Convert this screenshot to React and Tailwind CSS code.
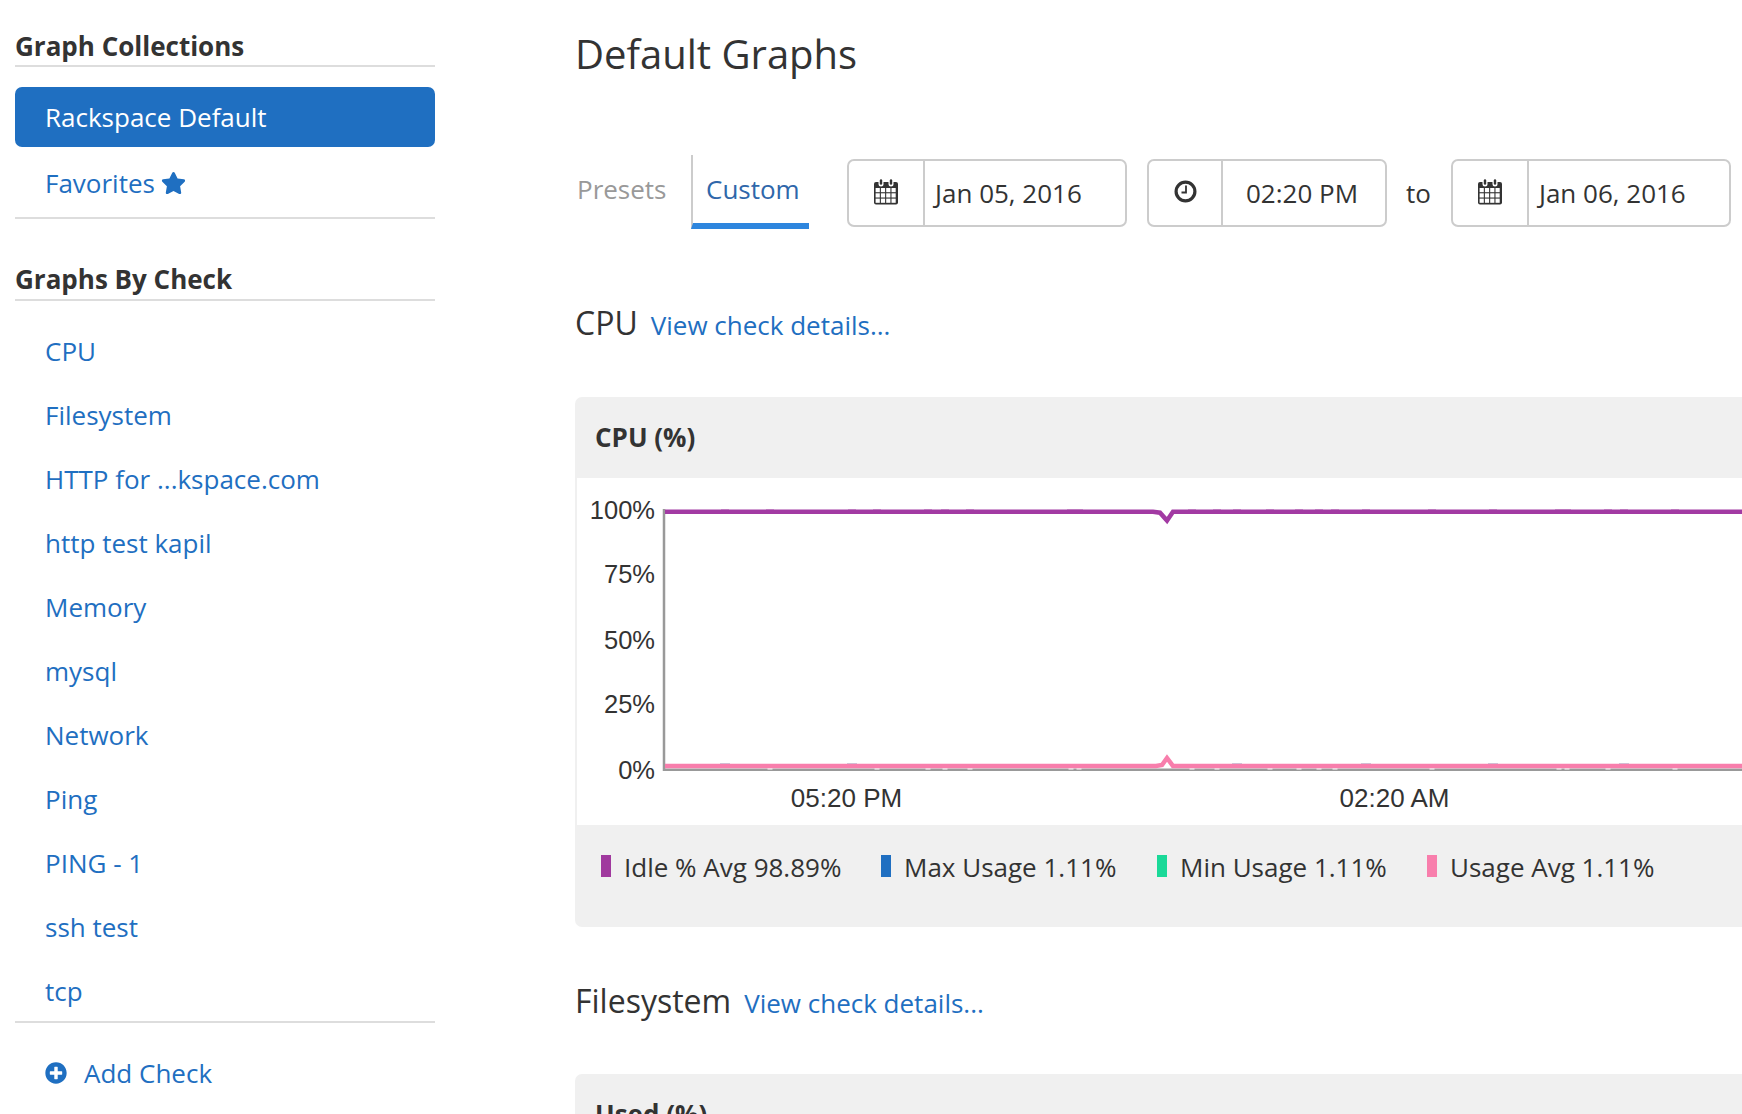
import { FaStar, FaPlusCircle } from "react-icons/fa";

const FONT = "font-['Open_Sans',sans-serif]";

const CHECKS = [
  "CPU",
  "Filesystem",
  "HTTP for ...kspace.com",
  "http test kapil",
  "Memory",
  "mysql",
  "Network",
  "Ping",
  "PING - 1",
  "ssh test",
  "tcp",
];

const LEGEND = [
  { label: "Idle % Avg 98.89%", color: "bg-[#a0399e]", width: "w-[280px]" },
  { label: "Max Usage 1.11%", color: "bg-[#1f6fc1]", width: "w-[276px]" },
  { label: "Min Usage 1.11%", color: "bg-[#1ad998]", width: "w-[270px]" },
  { label: "Usage Avg 1.11%", color: "bg-[#f87eac]", width: "w-[280px]" },
];

function CalendarIcon() {
  return (
    <svg width="26" height="27" viewBox="0 0 26 27" className="text-[#333]">
      <rect x="1" y="4" width="24" height="22.5" rx="2" fill="currentColor" />
      <rect x="5.5" y="0.5" width="5" height="8" rx="2.5" fill="#fff" />
      <rect x="15.5" y="0.5" width="5" height="8" rx="2.5" fill="#fff" />
      <rect x="6.8" y="1.3" width="2.4" height="5.5" rx="1.2" fill="currentColor" />
      <rect x="16.8" y="1.3" width="2.4" height="5.5" rx="1.2" fill="currentColor" />
      {[0, 1, 2].map((row) =>
        [0, 1, 2, 3].map((col) => (
          <rect
            key={`${row}-${col}`}
            x={2.6 + col * 5.3}
            y={10 + row * 5.3}
            width="4.2"
            height="4.2"
            fill="#fff"
          />
        ))
      )}
    </svg>
  );
}

function ClockIcon() {
  return (
    <svg width="23" height="23" viewBox="0 0 23 23" fill="none" stroke="#333">
      <circle cx="11.5" cy="11.5" r="9.4" strokeWidth="3.2" />
      <path d="M12 5.5v7H7.5" strokeWidth="1.8" />
    </svg>
  );
}

function InputBox({ icon, value, addonWidth, width, textClass }) {
  return (
    <div
      className={`flex h-[68px] items-stretch rounded-[7px] border-2 border-[#ccc] bg-white ${width}`}
    >
      <div
        className={`flex items-center justify-center border-r-2 border-[#ccc] pb-[3px] ${addonWidth}`}
      >
        {icon}
      </div>
      <div className={`flex items-center text-[26px] text-[#333] ${textClass}`}>{value}</div>
    </div>
  );
}

function SectionHeading({ title, className }) {
  return (
    <div className={`flex items-baseline ${className}`}>
      <span className="text-[32px] leading-[42px] text-[#333]">{title}</span>
      <span className="ml-[13px] text-[26px] text-[#1f6fc1]">View check details...</span>
    </div>
  );
}

// places where the flat series is not quite covered in the original chart
const NOTCH_X = [770, 877, 928, 945, 970, 1071, 1079, 1192, 1217, 1270, 1299, 1319, 1335, 1432, 1559, 1567, 1608, 1675];
const SOFT_X = [725, 852, 1237, 1366, 1493, 1624];

function Chart() {
  return (
    <svg
      width="1165"
      height="347"
      viewBox="577 478 1165 347"
      className="block"
      fontFamily="'Liberation Sans', sans-serif"
      fontSize="25.5"
      fill="#333"
    >
      <text x="655" y="519" textAnchor="end">100%</text>
      <text x="655" y="583" textAnchor="end">75%</text>
      <text x="655" y="649" textAnchor="end">50%</text>
      <text x="655" y="713" textAnchor="end">25%</text>
      <text x="655" y="779" textAnchor="end">0%</text>
      <text x="846.5" y="807" textAnchor="middle" fontSize="26">05:20 PM</text>
      <text x="1394.5" y="807" textAnchor="middle" fontSize="26">02:20 AM</text>
      <path d="M664 509V769.7H1742" fill="none" stroke="#999" strokeWidth="2.5" />
      {NOTCH_X.map((x) => (
        <rect key={x} x={x - 2.5} y="768.3" width="5" height="1.2" fill="#fff" />
      ))}
      {SOFT_X.map((x) => (
        <rect key={x} x={x - 5} y="763" width="10" height="1" fill="#8fa6c4" opacity="0.5" />
      ))}
      {[...NOTCH_X, ...SOFT_X].map((x) => (
        <rect key={x} x={x - 4} y="509" width="8" height="1" fill="#d9b3d8" />
      ))}
      <path
        d="M665 511.7H1153L1160 512.7L1167 520.5L1173 511.7H1742"
        fill="none"
        stroke="#a23aa3"
        strokeWidth="4.5"
      />
      <path
        d="M665 766H1156L1162 765L1167 758L1173 766H1742"
        fill="none"
        stroke="#f87eac"
        strokeWidth="4.5"
      />
    </svg>
  );
}

export default function App() {
  return (
    <div className={`flex h-[1114px] w-[1742px] overflow-hidden bg-white ${FONT}`}>
      <aside className="ml-[15px] w-[420px] shrink-0">
        <h3 className="mt-[28px] border-b-2 border-[#ddd] pb-[1px] text-[26px] font-bold leading-[36px] text-[#333]">
          Graph Collections
        </h3>
        <div className="mt-[20px] flex h-[60px] items-center rounded-[7px] bg-[#1f6fc1] pl-[30px] text-[26px] text-white">
          Rackspace Default
        </div>
        <div className="flex h-[72px] items-center gap-[6px] border-b-2 border-[#ddd] pl-[30px] pt-[2px] text-[26px] text-[#1f6fc1]">
          Favorites
          <FaStar className="mb-[1px] h-[24px] w-[25px]" />
        </div>
        <h3 className="mt-[42px] border-b-2 border-[#ddd] pb-[2px] text-[26px] font-bold leading-[36px] text-[#333]">
          Graphs By Check
        </h3>
        <ul className="mt-[18px] border-b-2 border-[#ddd]">
          {CHECKS.map((check) => (
            <li
              key={check}
              className="flex h-[64.1px] items-center pl-[30px] text-[26px] text-[#1f6fc1] last:h-[61px] last:pt-[3px]"
            >
              {check}
            </li>
          ))}
        </ul>
        <div className="mt-[31px] flex items-center pl-[30px] text-[26px] text-[#1f6fc1]">
          <FaPlusCircle className="mr-[17px] h-[22px] w-[22px]" />
          Add Check
        </div>
      </aside>

      <main className="ml-[140px] w-[1167px] shrink-0 overflow-hidden">
        <h1 className="mt-[28px] text-[40px] leading-[52px] text-[#333]">Default Graphs</h1>

        <div className="mt-[75px] flex items-start">
          <div className="flex h-[74px] w-[116px] items-center pb-[6px] pl-[2px] text-[26px] text-[#999]">
            Presets
          </div>
          <div className="flex h-[74px] w-[118px] items-center border-b-[6px] border-l-2 border-b-[#2e86de] border-l-[#ccc] pl-[13px] text-[26px] text-[#2f67aa]">
            Custom
          </div>
          <div className="ml-[38px] mt-[4px]">
            <InputBox
              icon={<CalendarIcon />}
              value="Jan 05, 2016"
              width="w-[280px]"
              addonWidth="w-[76px]"
              textClass="pl-[10px]"
            />
          </div>
          <div className="ml-[20px] mt-[4px]">
            <InputBox
              icon={<ClockIcon />}
              value="02:20 PM"
              width="w-[240px]"
              addonWidth="w-[74px]"
              textClass="pl-[23px]"
            />
          </div>
          <div className="ml-[19px] mt-[4px] flex h-[68px] items-center text-[26px] text-[#333]">
            to
          </div>
          <div className="ml-[20px] mt-[4px]">
            <InputBox
              icon={<CalendarIcon />}
              value="Jan 06, 2016"
              width="w-[280px]"
              addonWidth="w-[76px]"
              textClass="pl-[10px]"
            />
          </div>
        </div>

        <SectionHeading title="CPU" className="mt-[73px]" />

        <section className="mt-[52px] w-[1400px] rounded-[7px] bg-[#f0f0f0] pl-[2px]">
          <div className="flex h-[81px] items-center pl-[18px] text-[26px] font-bold text-[#333]">
            CPU (%)
          </div>
          <div className="h-[347px] bg-white">
            <Chart />
          </div>
          <div className="flex h-[102px] items-start pl-[24px] pt-[28px]">
            {LEGEND.map((item) => (
              <div key={item.label} className={`flex shrink-0 items-center ${item.width}`}>
                <span className={`mb-[2px] mr-[13px] h-[22px] w-[10px] ${item.color}`} />
                <span className="text-[26px] leading-[28px] text-[#333]">{item.label}</span>
              </div>
            ))}
          </div>
        </section>

        <SectionHeading title="Filesystem" className="mt-[53px]" />

        <section className="mt-[51px] h-[200px] w-[1400px] rounded-[7px] bg-[#f0f0f0] pl-[2px]">
          <div className="flex h-[81px] items-center pl-[18px] text-[26px] font-bold text-[#333]">
            Used (%)
          </div>
        </section>
      </main>
    </div>
  );
}
